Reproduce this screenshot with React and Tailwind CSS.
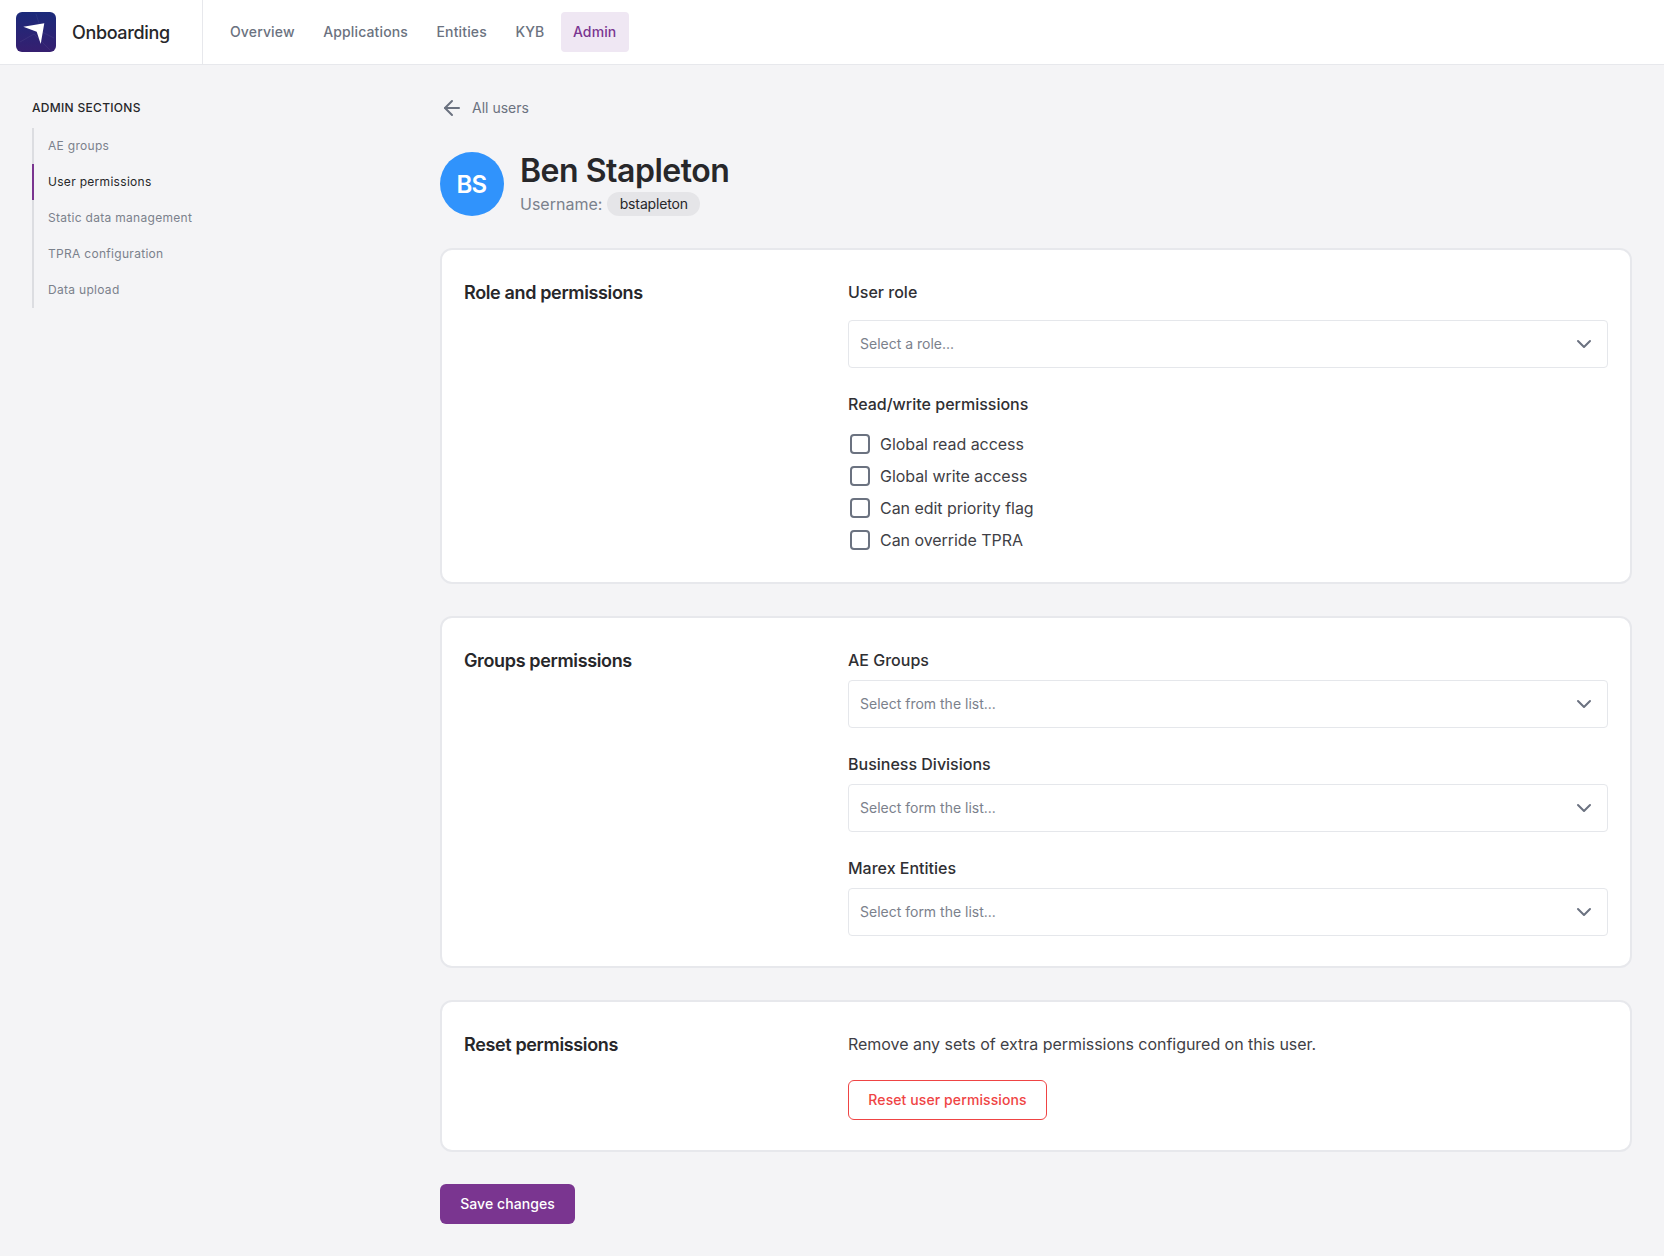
import { ChevronDown, ArrowLeft } from "lucide-react";

const navItems = ["Overview", "Applications", "Entities", "KYB", "Admin"];
const sideItems = ["AE groups", "User permissions", "Static data management", "TPRA configuration", "Data upload"];
const checks = ["Global read access", "Global write access", "Can edit priority flag", "Can override TPRA"];

function Logo() {
  return (
    <svg width="40" height="40" viewBox="0 0 40 40" className="shrink-0">
      <defs>
        <linearGradient id="logoBg" x1="0" y1="0" x2="0" y2="1">
          <stop offset="0" stopColor="#1b2a7a" />
          <stop offset="1" stopColor="#361f70" />
        </linearGradient>
      </defs>
      <rect width="40" height="40" rx="6" fill="url(#logoBg)" />
      <path d="M4 30 L18 22 L34 38 M20 2 L26 20 L38 26" stroke="#ffffff" strokeOpacity="0.06" fill="none" />
      <path d="M7.3 14.7 L28.3 11.3 L24.7 32 L20.7 19.7 Z" fill="#ffffff" />
    </svg>
  );
}

function Select({ placeholder }) {
  return (
    <div className="flex h-12 items-center justify-between rounded border border-[#e5e7eb] bg-white pl-[11px] pr-[11px]">
      <span className="text-sm text-[#7b818c]">{placeholder}</span>
      <ChevronDown className="h-6 w-6 text-[#6b7280]" strokeWidth={2} />
    </div>
  );
}

function Card({ title, children }) {
  return (
    <section className="flex rounded-xl border-2 border-[#e7e8ec] bg-white px-[22px] py-[30px]">
      <h2 className="w-[384px] shrink-0 text-lg leading-[26px] font-semibold tracking-[-0.02em] text-[#27272a]">{title}</h2>
      <div className="min-w-0 flex-1">{children}</div>
    </section>
  );
}

function Field({ label, placeholder }) {
  return (
    <div>
      <div className="mb-2 text-base leading-6 font-medium text-[#2f2f33]">{label}</div>
      <Select placeholder={placeholder} />
    </div>
  );
}

export default function App() {
  return (
    <div className="min-h-[1256px] bg-[#f4f4f6] font-['Inter',sans-serif]">
      <header className="flex h-[65px] border-b border-[#e7e8ec] bg-white">
        <div className="flex w-[203px] items-center gap-4 border-r border-[#e7e8ec] pl-4">
          <Logo />
          <span className="pt-px text-lg font-medium tracking-[-0.02em] text-[#27272a]">Onboarding</span>
        </div>
        <nav className="flex items-center gap-[4.5px] pl-[15px]">
          {navItems.map((item) => (
            <a
              key={item}
              className={
                item === "Admin"
                  ? "flex h-10 items-center rounded bg-[#efe7f3] pl-3 pr-[13px] text-sm font-medium tracking-[0.01em] text-[#7a3590]"
                  : "flex h-10 items-center rounded px-3 text-sm font-medium tracking-[0.01em] text-[#6b7280]"
              }
            >
              {item}
            </a>
          ))}
        </nav>
      </header>

      <div className="flex">
        <aside className="w-[440px] shrink-0 pl-8 pt-[35px]">
          <div className="text-xs leading-4 font-medium tracking-wide text-[#27272a] uppercase">Admin sections</div>
          <ul className="mt-3 w-fit">
            {sideItems.map((item) => (
              <li
                key={item}
                className={
                  item === "User permissions"
                    ? "flex h-9 items-center border-l-2 border-[#7a3590] pl-[14px] text-xs tracking-wide text-[#27272a]"
                    : "flex h-9 items-center border-l-2 border-[#dcdde1] pl-[14px] text-xs tracking-wide text-[#7b818c]"
                }
              >
                {item}
              </li>
            ))}
          </ul>
        </aside>

        <main className="w-[1192px] pb-8 pt-[31px]">
          <a className="flex h-6 items-center gap-2 text-sm text-[#6b7280]">
            <ArrowLeft className="h-6 w-6 text-[#6b7280]" strokeWidth={2} />
            All users
          </a>

          <div className="mt-8 flex items-center gap-4">
            <div className="flex h-16 w-16 items-center justify-center rounded-full bg-[#3093fc] pr-px pt-px text-2xl font-semibold tracking-tight text-white">BS</div>
            <div>
              <h1 className="text-[32px] leading-[38px] font-semibold tracking-[-0.015em] text-[#27272a]">Ben Stapleton</h1>
              <div className="mt-[2px] flex items-center gap-[5px]">
                <span className="text-base leading-6 text-[#7b818c]">Username:</span>
                <span className="flex h-6 w-[93px] items-center justify-center rounded-full bg-[#e5e5e8] text-sm tracking-[-0.01em] text-[#27272a]">bstapleton</span>
              </div>
            </div>
          </div>

          <div className="mt-8 flex flex-col gap-8">
            <Card title="Role and permissions">
              <div className="mb-4 text-base leading-6 font-medium text-[#2f2f33]">User role</div>
              <Select placeholder="Select a role..." />
              <div className="mb-4 mt-6 text-base leading-6 font-medium text-[#2f2f33]">Read/write permissions</div>
              <div className="flex flex-col gap-2">
                {checks.map((item) => (
                  <label key={item} className="flex h-6 items-center gap-2 text-base tracking-[-0.003em] text-[#3f3f46]">
                    <span className="flex h-6 w-6 items-center justify-center">
                      <span className="h-5 w-5 rounded border-2 border-[#6b7280] bg-white" />
                    </span>
                    {item}
                  </label>
                ))}
              </div>
            </Card>

            <Card title="Groups permissions">
              <div className="flex flex-col gap-6">
                <Field label="AE Groups" placeholder="Select from the list..." />
                <Field label="Business Divisions" placeholder="Select form the list..." />
                <Field label="Marex Entities" placeholder="Select form the list..." />
              </div>
            </Card>

            <Card title="Reset permissions">
              <p className="text-base leading-6 tracking-[-0.002em] text-[#3f3f46]">Remove any sets of extra permissions configured on this user.</p>
              <button className="mt-6 h-10 w-[199px] rounded-md border border-[#ef4444] bg-white text-sm font-medium tracking-[0.007em] text-[#ef4444]">
                Reset user permissions
              </button>
            </Card>
          </div>

          <button className="mt-8 h-10 w-[135px] rounded-md bg-[#7a3590] text-sm font-medium tracking-[0.005em] text-white">Save changes</button>
        </main>
      </div>
    </div>
  );
}
